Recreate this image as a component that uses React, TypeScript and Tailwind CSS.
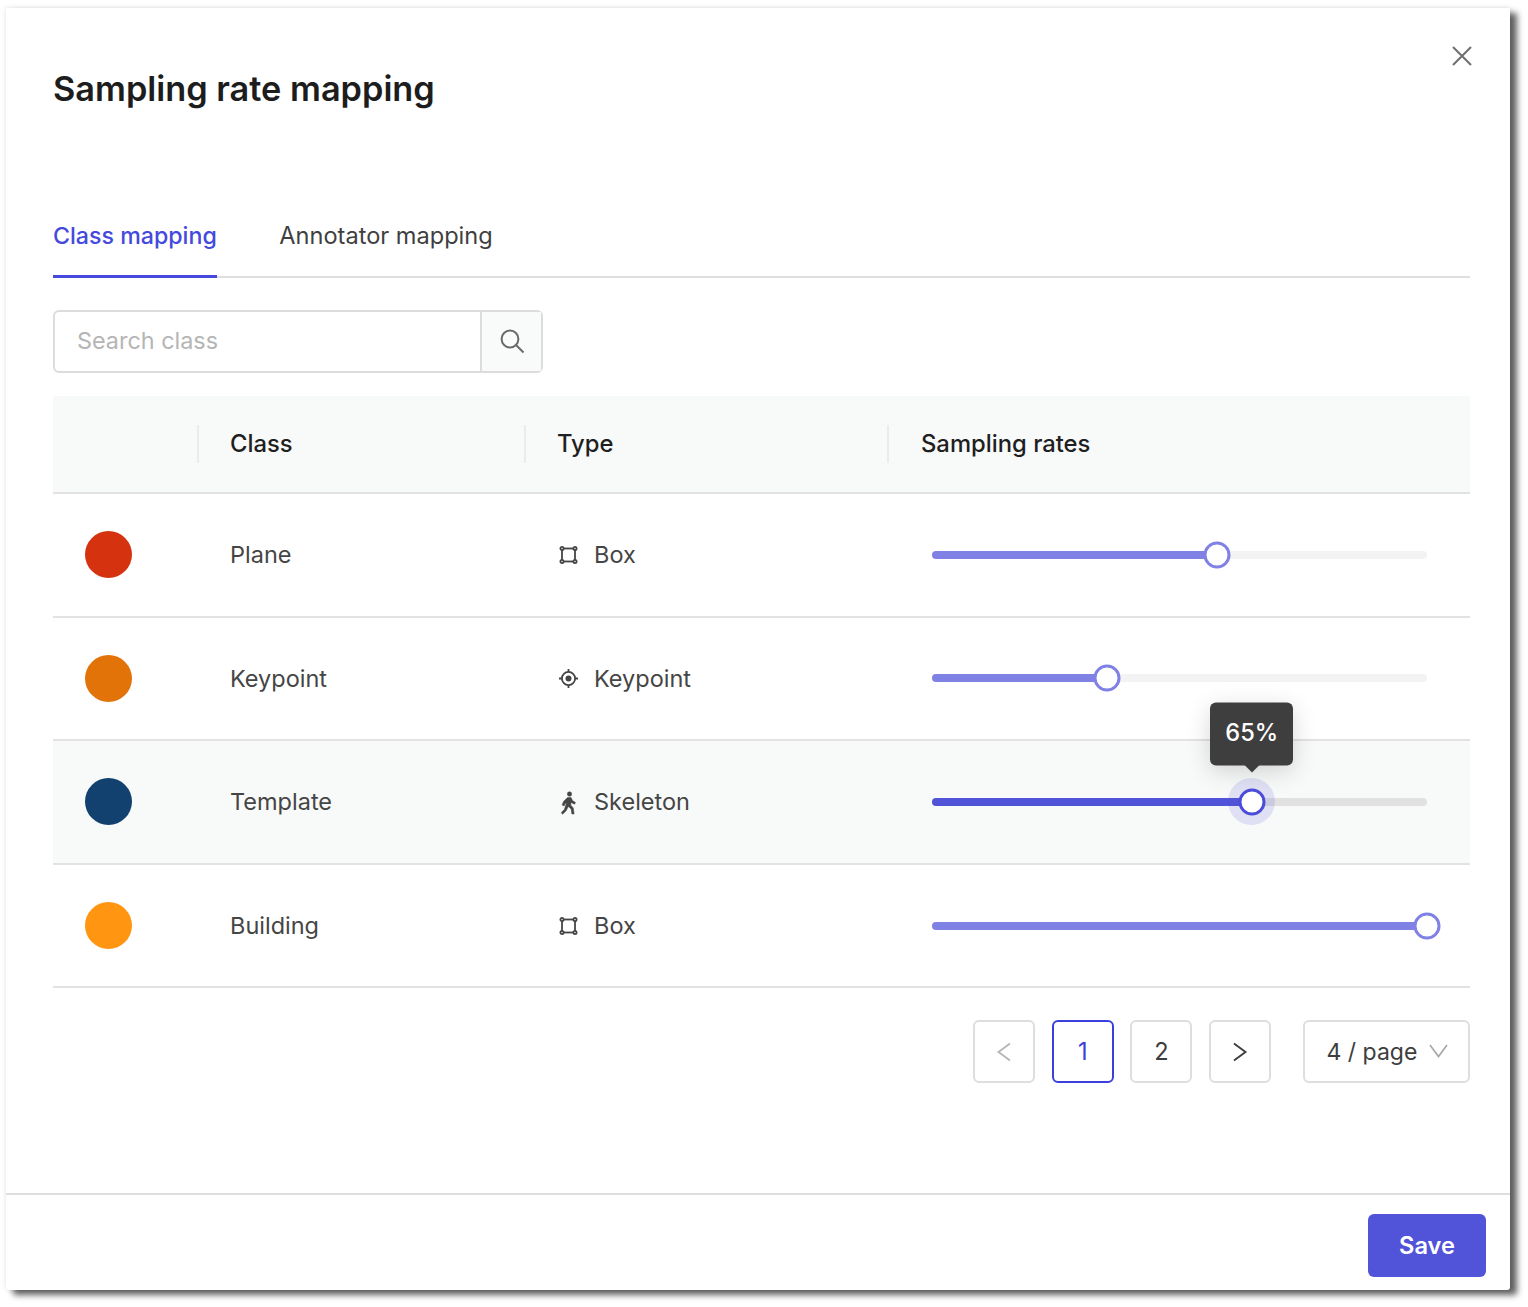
const ROWS = [
  { name: 'Plane', color: 'bg-[#d5320f]', type: 'Box', value: 57.6, active: false },
  { name: 'Keypoint', color: 'bg-[#e27308]', type: 'Keypoint', value: 35.4, active: false },
  { name: 'Template', color: 'bg-[#12406f]', type: 'Skeleton', value: 64.6, active: true },
  { name: 'Building', color: 'bg-[#ff9510]', type: 'Box', value: 100, active: false },
]

function BoxIcon() {
  return (
    <svg width="20" height="20" viewBox="0 0 20 20" fill="none" stroke="#454545" strokeWidth="1.8" className="translate-x-[0.5px]">
      <rect x="3.5" y="3.5" width="13" height="13" />
      <circle cx="3.5" cy="3.5" r="1.6" fill="#fff" />
      <circle cx="16.5" cy="3.5" r="1.6" fill="#fff" />
      <circle cx="3.5" cy="16.5" r="1.6" fill="#fff" />
      <circle cx="16.5" cy="16.5" r="1.6" fill="#fff" />
    </svg>
  )
}

function KeypointIcon() {
  return (
    <svg width="20" height="20" viewBox="0 0 20 20" fill="none" stroke="#454545" strokeWidth="1.8" className="translate-x-[0.5px] translate-y-[0.5px]">
      <circle cx="10" cy="10" r="6.6" />
      <circle cx="10" cy="10" r="3" fill="#454545" stroke="none" />
      <path d="M10 .5v3M10 16.5v3M.5 10h3M16.5 10h3" />
    </svg>
  )
}

function SkeletonIcon() {
  return (
    <svg width="16" height="24" viewBox="0 0 16 24" fill="#454545" stroke="#454545" strokeWidth="0.5" className="translate-x-[0.5px] translate-y-[1px]">
      <circle cx="9" cy="3" r="2.2" />
      <path d="M7 6.6L10.5 6.4 12 9.6 15 11.6 14 13.2 10.6 11.4 10.2 14 12.8 17 13.6 23 11.4 23 10.6 18 7.8 15.5 5.5 20 2 23.3 .8 21.6 3.8 18.6 6 12 4.6 12.8 3.6 15 1.6 14 3 10.4z" />
    </svg>
  )
}

function TypeIcon({ type }: { type: string }) {
  if (type === 'Keypoint') return <KeypointIcon />
  if (type === 'Skeleton') return <SkeletonIcon />
  return <BoxIcon />
}

function Slider({ value, active }: { value: number; active: boolean }) {
  return (
    <div className={`relative h-[8px] w-full rounded-full ${active ? 'bg-[#e1e1e1]' : 'bg-[#f3f3f3]'}`}>
      <div
        className={`h-full rounded-full ${active ? 'bg-[#5153d9]' : 'bg-[#7f81e4]'}`}
        style={{ width: `${value}%` }}
      />
      <div
        className="absolute top-1/2 -translate-x-1/2 -translate-y-1/2"
        style={{ left: `${value}%` }}
      >
        {active && (
          <>
            <div className="absolute left-1/2 top-1/2 size-[47px] -translate-x-1/2 -translate-y-1/2 rounded-full bg-[#5153d9]/15" />
            <div className="absolute bottom-[50px] left-1/2 flex h-[63px] w-[83px] -translate-x-1/2 items-center justify-center rounded-[6px] bg-[#3e3e3e] pb-[4px] text-[23.6px] font-medium text-white shadow-[0_6px_24px_rgba(0,0,0,0.16)]">
              65%
              <div className="absolute -bottom-[7px] left-1/2 size-0 -translate-x-1/2 border-x-[8px] border-t-[8px] border-x-transparent border-t-[#3e3e3e]" />
            </div>
          </>
        )}
        <div
          className={`relative size-[27px] rounded-full border-[3px] bg-white ${active ? 'border-[#4b4dd8]' : 'border-[#7f81e4]'}`}
        />
      </div>
    </div>
  )
}

function PageButton({ children, active }: { children: React.ReactNode; active?: boolean }) {
  return (
    <button
      className={`flex h-[63px] w-[62px] items-center justify-center rounded-[6px] border-2 text-[23.6px] ${active ? 'border-[#3b3fdc] text-[#3b3fdc]' : 'border-[#dedede] text-[#3d3d3d]'}`}
    >
      {children}
    </button>
  )
}

export default function App() {
  return (
    <div className="h-[1307px] w-[1528px] overflow-hidden bg-white pl-[6px] pt-[8px] font-['Inter',sans-serif]">
      <div className="flex h-[1282px] w-[1504px] flex-col rounded-b-[3px] bg-white shadow-[7px_5px_6px_rgba(0,0,0,0.62),0_0_5px_rgba(0,0,0,0.12)]">
        <div className="relative flex-1 pl-[47px] pr-[40px]">
          <button className="absolute right-[37px] top-[37px] text-[#6f6f6f]">
            <svg width="22" height="22" viewBox="0 0 22 22" fill="none" stroke="currentColor" strokeWidth="2">
              <path d="M2 2l18 18M20 2L2 20" />
            </svg>
          </button>
          <h1 className="pt-[58px] text-[34.3px] font-semibold leading-[46px] text-[#1d1d1d]">
            Sampling rate mapping
          </h1>

          <div className="mt-[86px] flex h-[80px] gap-[62.5px] border-b-2 border-[#dfdfdf]">
            <div className="-mb-[2px] border-b-[3px] border-[#4549dd] pt-[22px] text-[23.2px] font-medium leading-[32px] text-[#4549dd]">
              Class mapping
            </div>
            <div className="pt-[22px] text-[23.6px] leading-[32px] text-[#3f3f3f]">Annotator mapping</div>
          </div>

          <div className="mt-[32px] flex h-[63px] w-[490px] rounded-[6px] border-2 border-[#dcdcdc]">
            <div className="flex-1 pl-[22px] text-[23.4px] leading-[57px] text-[#b5b5b5]">Search class</div>
            <div className="flex w-[61px] items-center justify-center border-l-2 border-[#dcdcdc] bg-[#f9fafa] pb-[2px]">
              <svg width="26" height="26" viewBox="0 0 26 26" fill="none" stroke="#6a6a6a" strokeWidth="2">
                <circle cx="11" cy="11" r="8.4" />
                <path d="M17 17l7.5 7.5" />
              </svg>
            </div>
          </div>

          <div className="mt-[23px] grid h-[98px] grid-cols-[144px_327px_363px_1fr] items-center border-b-2 border-[#e2e2e2] bg-[#f8f9f9] text-[23.8px] font-medium leading-[32px] text-[#1f1f1f]">
            <div className="h-[38px]" />
            <div className="flex h-[38px] items-center border-l-2 border-[#ebebeb] pl-[31px]">Class</div>
            <div className="flex h-[38px] items-center border-l-2 border-[#ebebeb] pl-[31px]">Type</div>
            <div className="flex h-[38px] items-center border-l-2 border-[#ebebeb] pl-[32px]">Sampling rates</div>
          </div>

          {ROWS.map((row) => (
            <div
              key={row.name}
              className={`grid h-[123.6px] grid-cols-[144px_327px_363px_1fr] items-center border-b-2 border-[#e2e2e2] text-[23.5px] text-[#454545] ${row.active ? 'bg-[#f8f9f9]' : ''}`}
            >
              <div className="pl-[32px]">
                <div className={`size-[47px] rounded-full ${row.color}`} />
              </div>
              <div className="pl-[33px]">{row.name}</div>
              <div className="flex items-center gap-[15px] pl-[33px]">
                <span className="flex w-[22px] justify-center">
                  <TypeIcon type={row.type} />
                </span>
                {row.type}
              </div>
              <div className="pl-[45px] pr-[43px]">
                <Slider value={row.value} active={row.active} />
              </div>
            </div>
          ))}

          <div className="mt-[32px] flex justify-end gap-[16.67px]">
            <PageButton>
              <svg width="16" height="20" viewBox="0 0 16 20" fill="none" stroke="#b5b5b5" strokeWidth="1.8">
                <path d="M14 1.5L2.5 10 14 18.5" />
              </svg>
            </PageButton>
            <PageButton active>1</PageButton>
            <PageButton>2</PageButton>
            <PageButton>
              <svg width="16" height="20" viewBox="0 0 16 20" fill="none" stroke="#3d3d3d" strokeWidth="1.9">
                <path d="M2 1.5L13.5 10 2 18.5" />
              </svg>
            </PageButton>
            <div className="ml-[15.33px] flex h-[63px] w-[167px] items-center gap-[12px] rounded-[6px] border-2 border-[#dedede] pl-[21.5px] text-[23px] text-[#3d3d3d]">
              4 / page
              <svg width="19" height="14" viewBox="0 0 19 14" fill="none" stroke="#a8a8a8" strokeWidth="1.7" className="-translate-y-[1px]">
                <path d="M1 1l8.5 11.5L18 1" />
              </svg>
            </div>
          </div>
        </div>

        <div className="flex h-[97px] items-start justify-end border-t-2 border-[#dedede] pr-[24px] pt-[19px]">
          <button className="h-[63px] w-[118px] rounded-[6px] bg-[#5153d9] text-[23.6px] font-semibold text-white">
            Save
          </button>
        </div>
      </div>
    </div>
  )
}
